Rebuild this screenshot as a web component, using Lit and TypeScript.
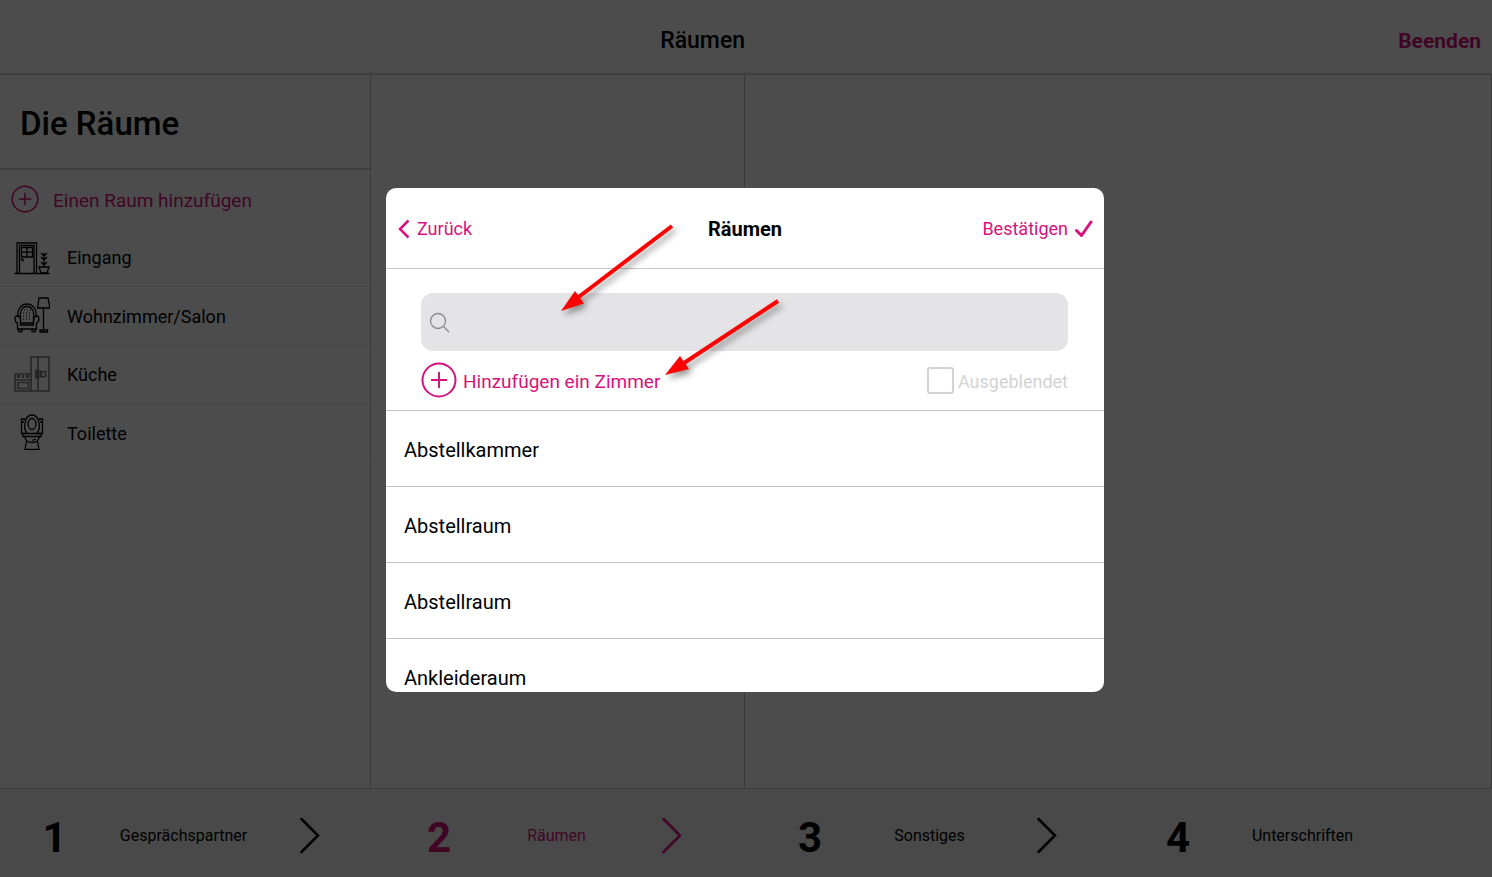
import { LitElement, html, css, svg, nothing } from "lit";
import { customElement, property } from "lit/decorators.js";

const doorIcon = svg`
  <path d="M0.5 34.5H35.5"/>
  <path d="M3 34V4H22.500V34M5.500 34V6.500H20V34"/>
  <path d="M7.500 8.500H18.500V18H7.500ZM13 8.500V18M7.500 13.200H18.500"/>
  <path d="M6.500 20.500H9V22.500"/>
  <path d="M25 28H35L33 34H27ZM30 28V14M27 14L30 17L33 14M27 18L30 21L33 18M27 23L30 26L33 23"/>`;

const salonIcon = svg`
  <path d="M4 20C3 11 8 7 13 7S23 11 22 20"/>
  <path d="M6.500 21C5.500 13 9 9.500 13 9.500S20.500 13 19.500 21V26H6.500Z"/>
  <path d="M3.500 32V26C0 24 0 19 3.500 19S6.500 22 6.500 26V28H19.500V26C19.500 22 19.500 19 22.500 19S26 24 22.500 26V32Z"/>
  <path d="M4.500 32V34.500H8V32M18 32V34.500H21.500V32"/>
  <path d="M10 13H17M9 16H18M9 19H18M9 22H18" stroke-width="1" stroke-dasharray="1 2"/>
  <path d="M25 1H34L36 11H23.500ZM29.500 11V33M26 33H33.500V35H26Z"/>`;

const kitchenIcon = svg`
  <path d="M1 18H17V35H1ZM17 1H35V35H17ZM24 1V35M1 24H17M4 26.500H14.500V32.500H4Z" stroke-width="1.600"/>
  <path d="M3 20.500H6M8 20.500H10M12 20.500H15" stroke-width="3"/>
  <path d="M22 14.500H24V21.500H22ZM24.500 15.500H27V20.500H24.500Z" stroke-width="2"/>
  <path d="M27 15.500H31.500V20.500H27" stroke-width="1.600"/>`;

const toiletIcon = svg`
  <path d="M13 19C9 15 10 1 18 1S27 15 23 19"/>
  <ellipse cx="18" cy="10" rx="4" ry="5.500"/>
  <path d="M11 5H7.500V19.500H13M25 5H28.500V19.500H23M7.500 8H10M26 8H28.500"/>
  <path d="M9 19.500H27V22.500H9Z"/>
  <path d="M11 22.500C11 26 13 28.500 18 28.500S25 26 25 22.500M12.500 27L11 35.500H25L23.500 27M18 26.500L22 25"/>`;

const plusCircle = svg`
  <circle cx="18" cy="18" r="16.500" stroke-width="2"/>
  <path d="M18 10V26M10 18H26" stroke-width="2"/>`;

const rooms = [
  { name: "Eingang", icon: doorIcon, muted: false },
  { name: "Wohnzimmer/Salon", icon: salonIcon, muted: false },
  { name: "Küche", icon: kitchenIcon, muted: true },
  { name: "Toilette", icon: toiletIcon, muted: false },
];

const steps = ["Gesprächspartner", "Räumen", "Sonstiges", "Unterschriften"];

const suggestions = ["Abstellkammer", "Abstellraum", "Abstellraum", "Ankleideraum"];

const base = css`
  * { box-sizing: border-box; }
  h1, h2, ul, ol { margin: 0; padding: 0; list-style: none; }
  button {
    margin: 0; padding: 0; border: 0; background: none;
    font: inherit; color: inherit; text-align: left; cursor: pointer;
  }
  svg { display: block; flex: none; fill: none; stroke: currentColor; }
  .label { padding-top: 2px; }
`;

@customElement("room-sidebar")
export class RoomSidebar extends LitElement {
  static styles = [base, css`
    :host { display: block; border-right: 1px solid #c4c4c4; }
    .title {
      padding: 29px 20px 25px; border-bottom: 2px solid #d2d2d2;
      font-size: 33px; line-height: 39px; font-weight: 500;
    }
    .add {
      display: flex; align-items: center; gap: 14px; width: 100%; height: 58px;
      padding-left: 11px; font-size: 19px; color: var(--accent);
    }
    .rooms { display: grid; grid-auto-rows: 1fr; height: 234px; }
    .room { display: flex; border-bottom: 1px solid #f2f2f2; }
    .room button {
      display: flex; align-items: center; gap: 17px; width: 100%;
      padding-left: 14px; font-size: 18px;
    }
    .muted { opacity: 0.5; }
  `];

  render() {
    return html`
      <h1 class="title">Die Räume</h1>
      <button class="add">
        <svg width="28" height="28" viewBox="0 0 36 36">${plusCircle}</svg>
        <span class="label">Einen Raum hinzufügen</span>
      </button>
      <ul class="rooms">
        ${rooms.map((room) => html`
          <li class="room">
            <button>
              <svg class=${room.muted ? "muted" : ""} width="36" height="36" viewBox="0 0 36 36" stroke-width="1.300">${room.icon}</svg>
              <span class="label">${room.name}</span>
            </button>
          </li>`)}
      </ul>`;
  }
}

@customElement("step-bar")
export class StepBar extends LitElement {
  @property({ type: Number }) current = 2;

  static styles = [base, css`
    :host { display: block; border-top: 1px solid #c4c4c4; background: #f5f5f5; }
    .steps { display: grid; grid-template-columns: repeat(4, 1fr); height: 88px; }
    .step { display: flex; padding: 5px 12px 0 16px; }
    .step button {
      flex: 1; display: flex; align-items: center; justify-content: space-around; font-size: 16px;
    }
    .number { padding-top: 4px; font-size: 42px; line-height: 48px; font-weight: 700; }
    .active { color: var(--accent); }
  `];

  render() {
    return html`
      <ol class="steps">
        ${steps.map((label, i) => html`
          <li class="step ${i + 1 === this.current ? "active" : ""}">
            <button>
              <span class="number">${i + 1}</span>
              <span>${label}</span>
              <svg width="34" height="36" viewBox="0 0 34 36" stroke-width="2.500" stroke-linecap="round">
                ${i < steps.length - 1 ? svg`<path d="M1.500 1L18 17.500L1.500 34"/>` : nothing}
              </svg>
            </button>
          </li>`)}
      </ol>`;
  }
}

@customElement("room-dialog")
export class RoomDialog extends LitElement {
  static styles = [base, css`
    :host {
      display: flex; flex-direction: column; width: 718px; max-width: 100%; max-height: 504px;
      overflow: hidden; border-radius: 10px; background: #fff; color: #000;
    }
    .bar {
      flex: none; display: grid; grid-template-columns: 1fr auto 1fr; align-items: center;
      height: 81px; padding: 2px 11px 0; border-bottom: 1px solid #c8c8c8;
    }
    .bar button { display: flex; align-items: center; gap: 6px; font-size: 18px; color: var(--accent); }
    .bar .confirm { justify-self: end; }
    .heading { font-size: 20px; font-weight: 700; }
    .filters { flex: none; padding: 24px 36px 0 35px; border-bottom: 1px solid #c8c8c8; }
    .search {
      display: flex; align-items: center; gap: 8px; height: 58px; padding: 2px 8px 0;
      border-radius: 12px; background: #e4e4e6; color: #8a8a8a;
    }
    .search input {
      flex: 1; min-width: 0; height: 100%; padding: 0; border: 0; outline: 0;
      background: none; font: inherit; font-size: 20px; color: #000;
    }
    .options { display: flex; align-items: center; justify-content: space-between; height: 59px; }
    .add { display: flex; align-items: center; gap: 6px; font-size: 19px; color: var(--accent); }
    .hidden { display: flex; align-items: center; gap: 4px; font-size: 18px; color: #d3d3d3; }
    .hidden input {
      appearance: none; width: 27px; height: 27px; margin: 0;
      border: 2px solid #d3d3d3; border-radius: 3px; background: #fff;
    }
    .list { min-height: 0; overflow: hidden; }
    .list li { display: flex; height: 76px; border-bottom: 1px solid #c8c8c8; }
    .list button { flex: 1; padding: 3px 18px 0; font-size: 20px; }
  `];

  render() {
    return html`
      <header class="bar">
        <button>
          <svg width="14" height="20" viewBox="0 0 14 20" stroke-width="2.500"><path d="M11.500 1.500L3 10L11.500 18.500"/></svg>
          Zurück
        </button>
        <h2 class="heading">Räumen</h2>
        <button class="confirm">
          Bestätigen
          <svg width="19" height="18" viewBox="0 0 19 18" stroke-width="3" stroke-linecap="round" stroke-linejoin="round">
            <path d="M2.500 10.500L7.500 15.500L17 2"/>
          </svg>
        </button>
      </header>
      <div class="filters">
        <label class="search">
          <svg width="21" height="21" viewBox="0 0 21 21" stroke-width="1.300">
            <circle cx="9" cy="9" r="7.500"/><path d="M14.500 14.500L20 20"/>
          </svg>
          <input type="search" aria-label="Räumen" />
        </label>
        <div class="options">
          <button class="add">
            <svg width="36" height="36" viewBox="0 0 36 36">${plusCircle}</svg>
            <span class="label">Hinzufügen ein Zimmer</span>
          </button>
          <label class="hidden"><input type="checkbox" /><span class="label">Ausgeblendet</span></label>
        </div>
      </div>
      <ul class="list">
        ${suggestions.map((name) => html`<li><button>${name}</button></li>`)}
      </ul>`;
  }
}

@customElement("app-root")
export class AppRoot extends LitElement {
  static styles = [base, css`
    :host {
      --accent: #d6127e;
      display: flex; flex-direction: column; position: relative; min-height: 100vh;
      background: #fff; color: #000; font-family: Roboto, "Liberation Sans", sans-serif;
    }
    .top {
      display: flex; align-items: center; gap: 4px;
      height: 75px; padding: 8px 11px 0; border-bottom: 2px solid #d2d2d2;
    }
    .page-title { flex: 1; text-align: center; font-size: 23px; font-weight: 500; }
    .finish { font-size: 21px; font-weight: 700; color: var(--accent); }
    .columns { flex: 1; display: grid; grid-template-columns: 371fr 374fr 747fr; }
    .column { border-right: 1px solid #c4c4c4; }
    .overlay {
      position: absolute; inset: 0; display: grid; place-items: center;
      padding: 2px 2px 0 0; background: rgba(0, 0, 0, 0.7);
    }
    .arrows {
      position: absolute; left: 50%; top: 50%; margin: -220px 0 0 -191px;
      filter: drop-shadow(3px 4px 3px rgba(0, 0, 0, 0.4)); pointer-events: none;
    }
  `];

  render() {
    return html`
      <header class="top">
        <h2 class="page-title">Räumen</h2>
        <button class="finish">Beenden</button>
      </header>
      <main class="columns">
        <room-sidebar></room-sidebar>
        <section class="column"></section>
        <section class="column"></section>
      </main>
      <step-bar .current=${2}></step-bar>
      <div class="overlay">
        <room-dialog role="dialog" aria-label="Räumen"></room-dialog>
        <svg class="arrows" width="230" height="162" viewBox="555 219 230 162" aria-hidden="true">
          <g stroke="#f00" stroke-width="4"><path d="M672 226L576 299"/><path d="M778 301L681 365"/></g>
          <g fill="#f00" stroke="none"><path d="M561 311L575 291L584 303.500Z"/><path d="M665 375L680 356L689 369Z"/></g>
        </svg>
      </div>`;
  }
}
